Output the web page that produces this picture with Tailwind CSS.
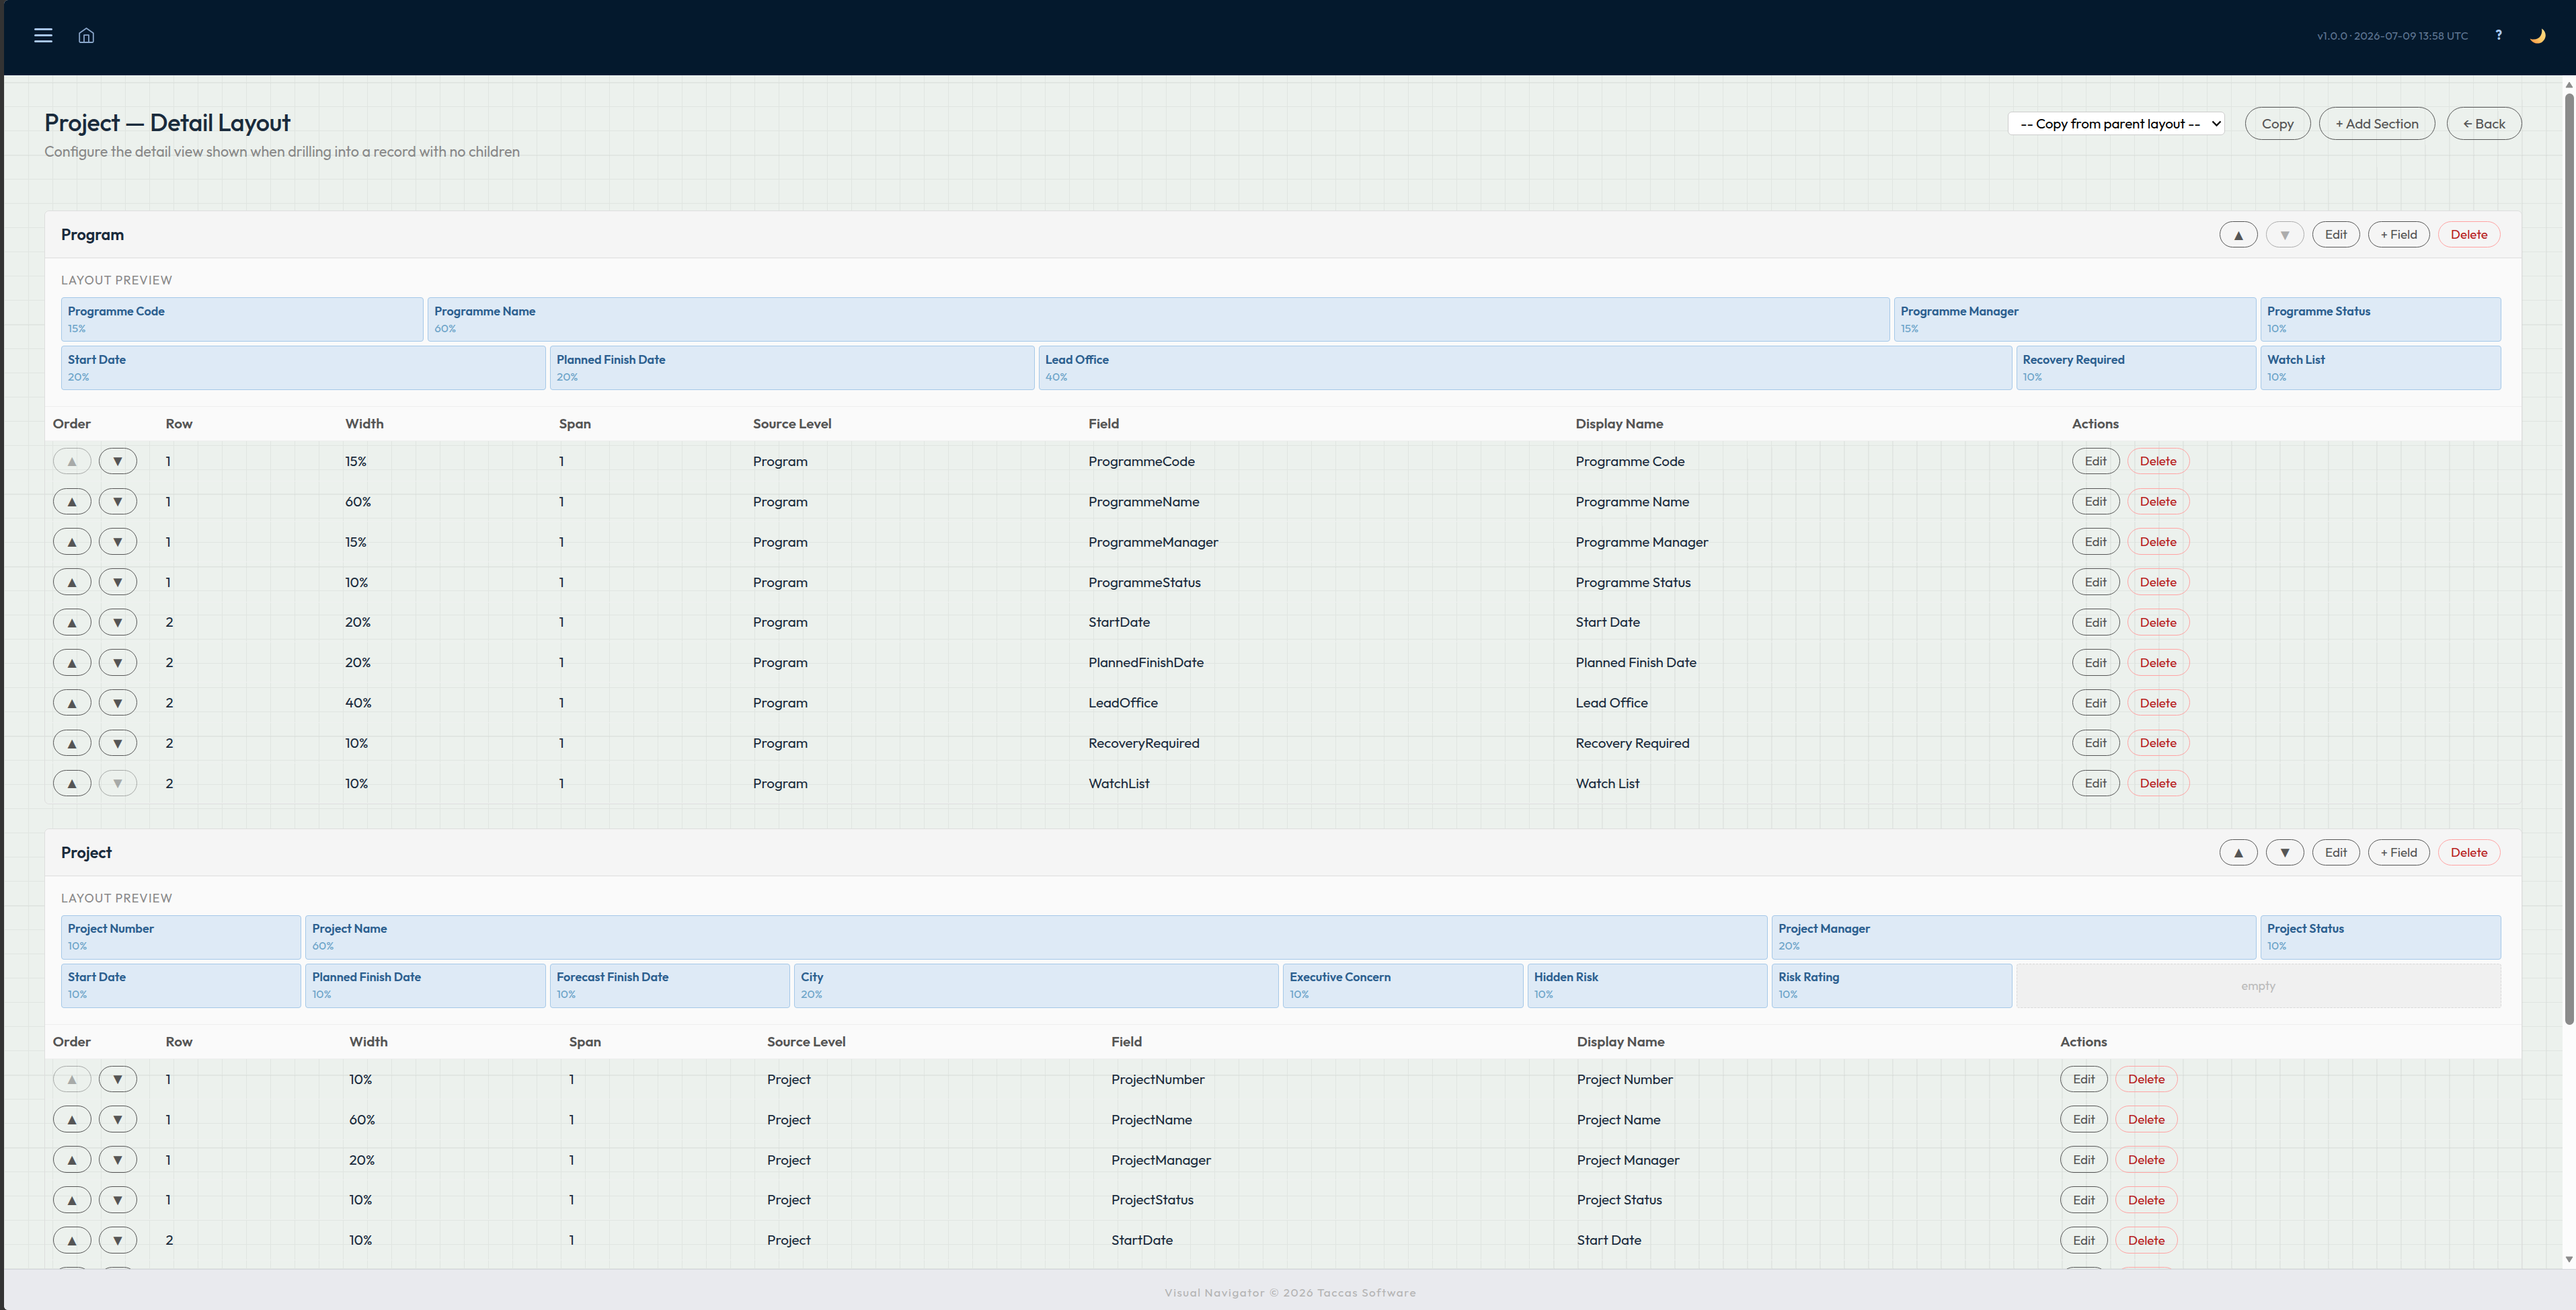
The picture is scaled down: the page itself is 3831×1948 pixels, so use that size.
<!DOCTYPE html>
<html lang="en">
<head>
    <meta charset="UTF-8">
    <meta name="viewport" content="width=device-width, initial-scale=1.0">
    <title>Project — Detail Layout</title>
    <script src="https://cdn.jsdelivr.net/npm/@tailwindcss/browser@4"></script>
</head>
<body class="h-[1948px] w-[3831px] overflow-hidden bg-[#333333] pl-[6px] font-['Outfit','Lato',sans-serif] text-[20.7px] text-[#1a2b3c]">
    <div class="flex h-full flex-col overflow-hidden rounded-l-[6px] bg-[#ecf1ed]">
        <header class="flex h-[112px] shrink-0 items-start border-b border-[#0b2340] bg-[#04192d] pl-[45px] pr-[45px]">
            <button class="mt-[42px] flex w-[27px] flex-col gap-[6px]">
                <span class="h-[3px] w-full rounded-sm bg-[#a8c5e8]"></span>
                <span class="h-[3px] w-full rounded-sm bg-[#a8c5e8]"></span>
                <span class="h-[3px] w-full rounded-sm bg-[#a8c5e8]"></span>
            </button>
            <svg class="ml-[38px] mt-[40px] h-[25px] w-[25px]" viewBox="0 0 25 25" fill="none" stroke="#8aa6ca" stroke-width="1.8" stroke-linejoin="round" stroke-linecap="round">
                <path d="M2.2 9.2 12.5 2 22.8 9.2V21.6a1.4 1.4 0 0 1-1.4 1.4H3.6a1.4 1.4 0 0 1-1.4-1.4z"/>
                <path d="M9 23V12.2h7V23"/>
            </svg>
            <div class="ml-auto flex items-start">
                <span class="mt-[41px] text-[16.2px] leading-[24px] tracking-[0.3px] text-[#5f7693]">v1.0.0 · 2026-07-09 13:58 UTC</span>
                <span class="ml-[40px] mt-[40px] text-[19.8px] font-bold leading-[24px] text-[#a8c8f0]">?</span>
                <svg class="ml-[41px] mt-[42px] h-[23px] w-[24px]" viewBox="0 0 24 23">
                    <defs>
                        <linearGradient id="moon" x1="1" y1="0" x2="0" y2="1">
                            <stop offset="0" stop-color="#ffe08a"/>
                            <stop offset="0.55" stop-color="#fdc765"/>
                            <stop offset="1" stop-color="#f5893f"/>
                        </linearGradient>
                    </defs>
                    <path d="M18 .6C26.500 6 25 17 17.500 21.200 11.500 24.300 3.500 22 .6 15.400c6 2.600 12.500.8 15.600-4C18.300 8 18.700 4 18 .6z" fill="url(#moon)"/>
                </svg>
            </div>
        </header>

        <div class="flex h-[1775px] shrink-0">
            <main class="relative w-[3805px] overflow-hidden">
                <!-- graph paper backdrop -->
                <svg class="absolute inset-0" width="3805" height="1775">
                    <defs>
                        <pattern id="grid" width="36" height="36" patternUnits="userSpaceOnUse">
                            <path d="M0 0h1v36h-1zM1 10h35v1h-35z" fill="#000" fill-opacity="0.05"/>
                        </pattern>
                        <pattern id="cols" width="36" height="36" patternUnits="userSpaceOnUse">
                            <path d="M1 0h1v36h-1z" fill="#000" fill-opacity="0.035"/>
                        </pattern>
                    </defs>
                    <rect width="3805" height="1775" fill="url(#grid)"/>
                    <path d="M3805 9V1775H2300V706z" fill="url(#cols)"/>
                    <path d="M0 11.500h3805M0 119.500h3805M0 371.500h3805M0 623.500h3805M0 731.500h3805M0 983.500h3805M0 1235.500h3805M0 1487.500h3805M0 1595.500h3805" stroke="#000" stroke-opacity="0.04"/>
                </svg>

                <div class="relative pl-[60px] pr-[60px]">
                    <div class="flex h-[201px] items-start justify-between pt-[47px]">
                        <div>
                            <h1 class="text-[36px] font-medium leading-[45px] tracking-[-0.34px]">Project — Detail Layout</h1>
                            <p class="mt-[8px] text-[21.6px] leading-[27px] text-[#888888]">Configure the detail view shown when drilling into a record with no children</p>
                        </div>
                        <div class="flex items-center text-[#555555]">
                            <div class="relative mr-[30px]">
                                <select class="block h-[35px] w-[323px] appearance-none rounded-[6px] border border-[#cccccc] bg-white pl-[18px] text-[20.7px] leading-[33px] tracking-[-0.13px] text-black">
                                    <option>-- Copy from parent layout --</option>
                                </select>
                                <svg class="absolute right-[5px] top-[13px] h-[10px] w-[15px]" viewBox="0 0 15 10" fill="none" stroke="#000" stroke-width="2.4"><path d="M1.500 1.500 7.500 7.500 13.500 1.500"/></svg>
                            </div>
                            <button class="mr-[12px] h-[49px] w-[98px] rounded-full border border-[#555555]">Copy</button>
                            <button class="mr-[17px] h-[49px] w-[173px] rounded-full border border-[#555555] tracking-[-0.1px]">+ Add Section</button>
                            <button class="h-[49px] w-[112px] rounded-full border border-[#555555]">← Back</button>
                        </div>
                    </div>
                    <div id="sections"></div>
                </div>
            </main>

            <!-- scrollbar -->
            <div class="flex w-[20px] flex-col items-center bg-[#fcfcfc]">
                <svg class="mt-[9px] h-[10px] w-[12px]" viewBox="0 0 12 10"><path d="M6 1 11 9H1z" fill="#8b8b8b" stroke="#8b8b8b" stroke-linejoin="round"/></svg>
                <div class="mt-[8px] h-[1385px] w-[13px] rounded-full bg-[#8b8b8b]"></div>
                <svg class="mb-[9px] mt-auto h-[10px] w-[12px]" viewBox="0 0 12 10"><path d="M6 9 11 1H1z" fill="#8b8b8b" stroke="#8b8b8b" stroke-linejoin="round"/></svg>
            </div>
        </div>

        <footer class="flex flex-1 justify-center border-t border-[#d3d6dc] bg-[#e9eaee] pl-[2px] pt-[21px] text-[17.1px] leading-[26px] tracking-[1.53px] text-[#b3b3b3]">Visual Navigator © 2026 Taccas Software</footer>
    </div>

    <script>
        const sections = [
            {
                name: 'Program', first: true,
                cols: 'grid-cols-[168px_267px_318px_288.5px_499px_724.5px_738px_1fr]',
                preview: [['Programme Code', 15], ['Programme Name', 60], ['Programme Manager', 15], ['Programme Status', 10],
                          ['Start Date', 20], ['Planned Finish Date', 20], ['Lead Office', 40], ['Recovery Required', 10], ['Watch List', 10]],
                rows: [[1, 15, 'Programme Code'], [1, 60, 'Programme Name'], [1, 15, 'Programme Manager'], [1, 10, 'Programme Status'],
                       [2, 20, 'Start Date'], [2, 20, 'Planned Finish Date'], [2, 40, 'Lead Office'], [2, 10, 'Recovery Required'], [2, 10, 'Watch List']],
                total: 9
            },
            {
                name: 'Project',
                cols: 'grid-cols-[168px_273px_327px_294.5px_512px_692.5px_718.5px_1fr]',
                preview: [['Project Number', 10], ['Project Name', 60], ['Project Manager', 20], ['Project Status', 10],
                          ['Start Date', 10], ['Planned Finish Date', 10], ['Forecast Finish Date', 10], ['City', 20],
                          ['Executive Concern', 10], ['Hidden Risk', 10], ['Risk Rating', 10], ['', 20]],
                rows: [[1, 10, 'Project Number'], [1, 60, 'Project Name'], [1, 20, 'Project Manager'], [1, 10, 'Project Status'],
                       [2, 10, 'Start Date'], [2, 10, '']],
                total: 11
            }
        ];

        const spans = { 10: 'col-span-2', 15: 'col-span-3', 20: 'col-span-4', 40: 'col-span-8', 60: 'col-span-12' };

        const arrow = (glyph, off) => `<button class="flex h-[39.5px] w-[57px] items-center justify-center rounded-full border border-[#555555] text-[22.5px] leading-[30px] text-[#555555] ${off ? 'opacity-45' : ''}">${glyph}</button>`;
        const edit = '<button class="h-[39.5px] w-[71px] rounded-full border border-[#555555] text-[18.9px] text-[#555555]">Edit</button>';
        const field = '<button class="h-[39.5px] w-[92px] rounded-full border border-[#555555] text-[18.9px] text-[#555555]">+ Field</button>';
        const del = '<button class="h-[39.5px] w-[93px] rounded-full border border-[#ffa3a3] text-[18.9px] text-[#b71c1c]">Delete</button>';

        const box = ([label, pct]) => label
            ? `<div class="${spans[pct]} h-[66px] rounded-[4px] border border-[#a5c8e8] bg-[#deeaf6] pl-[9px] pt-[7.6px]">
                   <div class="text-[18px] font-semibold leading-[24px] text-[#2c5f8f]">${label}</div>
                   <div class="mt-[2px] text-[17.1px] leading-[22px] text-[#6ba3c8]">${pct}%</div>
               </div>`
            : `<div class="${spans[pct]} flex h-[66px] items-center justify-center rounded-[4px] border border-dashed border-[#d8d8d8] bg-[#f0f0f0] text-[18px] text-[#bbbbbb]">empty</div>`;

        document.getElementById('sections').innerHTML = sections.map(s => `
            <section class="mb-[36px] overflow-hidden rounded-[7px] border border-[#dddddd]">
                <div class="flex h-[70px] items-center justify-between border-b border-[#dddddd] bg-[#f5f5f5] pl-[24px] pr-[31px]">
                    <h2 class="text-[23.4px] font-semibold tracking-[-0.1px]">${s.name}</h2>
                    <div class="flex gap-[12px]">${arrow('▲')}${arrow('▼', s.first)}${edit}${field}${del}</div>
                </div>
                <div class="h-[221px] border-b border-[#eeeeee] bg-[#fafafa] pl-[24px] pr-[30.5px] pt-[20px]">
                    <div class="mb-[12px] text-[18px] leading-[26px] tracking-[1.2px] text-[#888888]">LAYOUT PREVIEW</div>
                    <div class="grid grid-cols-20 gap-[6px]">${s.preview.map(box).join('')}</div>
                </div>
                <div class="grid ${s.cols} h-[51px] items-center border-b border-[#eeeeee] bg-[#fafafa] pl-[11.5px] font-semibold text-[#555555]">
                    ${['Order', 'Row', 'Width', 'Span', 'Source Level', 'Field', 'Display Name', 'Actions'].map(h => `<div>${h}</div>`).join('')}
                </div>
                ${s.rows.map(([row, width, label], i) => `
                <div class="grid ${s.cols} h-[59.875px] items-center border-b border-[#eff1f0] pl-[11.5px] tracking-[-0.1px]">
                    <div class="flex gap-[11px]">${arrow(label && '▲', i === 0)}${arrow(label && '▼', i === s.total - 1)}</div>
                    <div>${label && row}</div>
                    <div>${label && width + '%'}</div>
                    <div>${label && 1}</div>
                    <div>${label && s.name}</div>
                    <div>${label.replaceAll(' ', '')}</div>
                    <div>${label}</div>
                    <div class="flex gap-[11px]">${label ? edit + del : edit.replace('Edit', '') + del.replace('Delete', '')}</div>
                </div>`).join('')}
            </section>`).join('');
    </script>
</body>
</html>
